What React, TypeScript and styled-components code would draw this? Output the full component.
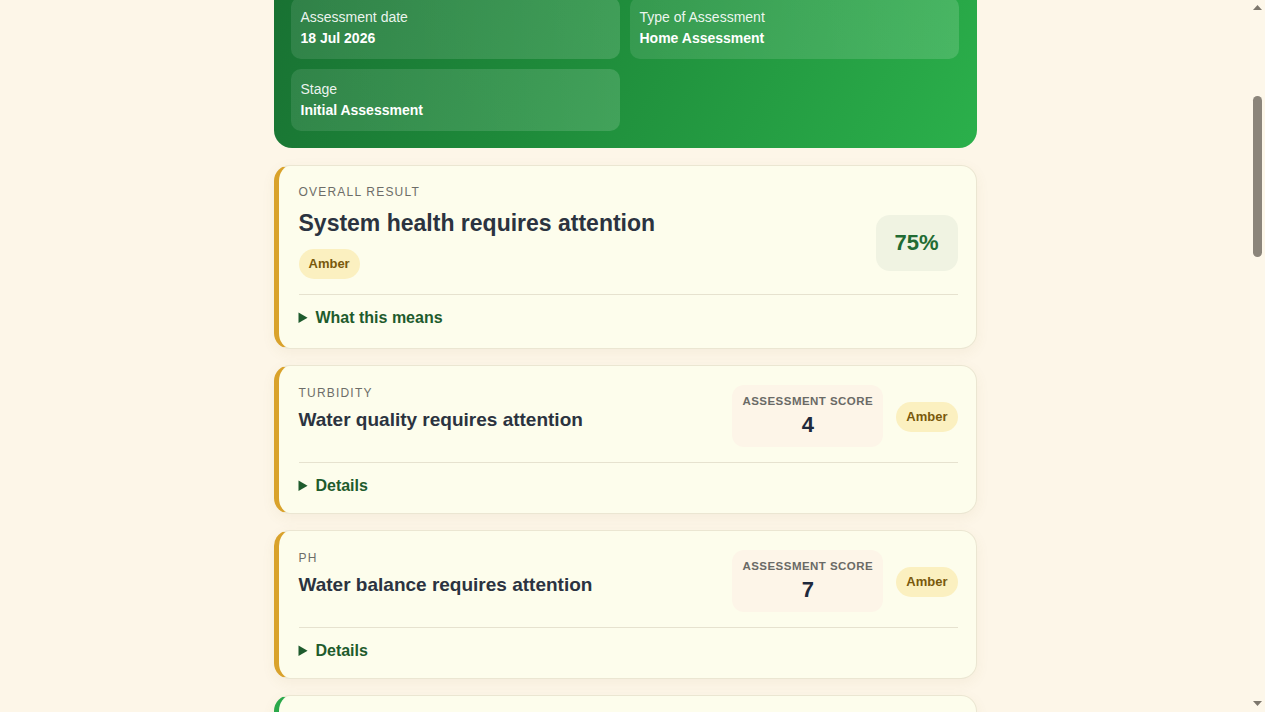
import React, { useLayoutEffect, useRef } from "react";
import styled, { createGlobalStyle } from "styled-components";

const GlobalStyle = createGlobalStyle`
  html {
    scrollbar-width: none;
  }
  html::-webkit-scrollbar { display: none; }
  body {
    margin: 0;
    background: #fdf6e8;
    font-family: "Liberation Sans", Arial, sans-serif;
    color: #2b3340;
  }
  * { box-sizing: border-box; }
`;

const Shell = styled.div`
  padding-right: 15px;
`;

const Page = styled.main`
  max-width: 703px;
  margin: 0 auto;
  padding: 24px 0 40px;
  display: flex;
  flex-direction: column;
  gap: 16px;
`;

const TopBar = styled.header`
  display: flex;
  align-items: center;
  gap: 10px;
  height: 56px;
  font-size: 18px;
  font-weight: 700;
  color: #1e5b2d;
`;

const Hero = styled.section`
  border-radius: 18px;
  padding: 24px 18px 17px 17px;
  margin-bottom: 1px;
  color: #ffffff;
  background: linear-gradient(120deg, #176c31 0%, #1e8a3a 45%, #2bb04b 100%);
`;

const HeroEyebrow = styled.div`
  font-size: 12px;
  letter-spacing: 0.1em;
  text-transform: uppercase;
  opacity: 0.85;
`;

const HeroTitle = styled.h1`
  margin: 8px 0 6px;
  font-size: 28px;
  line-height: 34px;
`;

const HeroSub = styled.p`
  margin: 0 0 20px;
  font-size: 14px;
  line-height: 20px;
  opacity: 0.9;
`;

const InfoGrid = styled.div`
  display: grid;
  grid-template-columns: 1fr 1fr;
  gap: 10px;
`;

const InfoBox = styled.div`
  border-radius: 10px;
  padding: 10px;
  background: linear-gradient(90deg, rgba(255, 255, 255, 0.1), rgba(255, 255, 255, 0.15));
`;

const InfoLabel = styled.div`
  font-size: 14px;
  line-height: 20px;
  color: rgba(255, 255, 255, 0.92);
`;

const InfoValue = styled.div`
  font-size: 14px;
  line-height: 21px;
  padding-top: 1px;
  font-weight: 700;
`;

const Card = styled.article<{ $accent: string }>`
  background: #fdfdec;
  border: 1px solid #ebe6d2;
  border-left: 5px solid ${(p) => p.$accent};
  border-radius: 16px;
  padding: 19px 18px 0 20px;
  box-shadow: 0 4px 14px rgba(140, 110, 50, 0.07);
`;

const Eyebrow = styled.div`
  font-size: 12px;
  line-height: 15px;
  letter-spacing: 0.1em;
  text-transform: uppercase;
  color: #6d6d68;
`;

const OverallRow = styled.div`
  display: flex;
  align-items: center;
  justify-content: space-between;
  margin-top: 9px;
`;

const OverallTitle = styled.h2`
  margin: 0;
  font-size: 23px;
  line-height: 29px;
  font-weight: 700;
  color: #2b3340;
`;

const Pill = styled.span<{ $tone: "amber" | "green" }>`
  display: inline-block;
  padding: 7px 10px;
  border-radius: 999px;
  font-size: 13px;
  line-height: 16px;
  font-weight: 700;
  background: ${(p) => (p.$tone === "amber" ? "#fbf0c0" : "#dcf3dc")};
  color: ${(p) => (p.$tone === "amber" ? "#79590c" : "#1e5b2d")};
`;

const PillSpacer = styled.div`
  margin-top: 11px;
  height: 30px;
`;

const Percent = styled.div`
  width: 82px;
  height: 56px;
  margin-top: -2px;
  border-radius: 14px;
  background: #f0f3e2;
  display: flex;
  align-items: center;
  justify-content: center;
  font-size: 22px;
  font-weight: 700;
  color: #226b33;
`;

const HeaderRow = styled.div`
  display: flex;
  align-items: flex-start;
  justify-content: space-between;
  padding-top: 1px;
`;

const MetricTitle = styled.h3`
  margin: 7px 0 0;
  font-size: 19px;
  line-height: 24px;
  font-weight: 700;
  color: #2b3340;
`;

const Side = styled.div`
  display: flex;
  align-items: center;
  gap: 13px;
`;

const ScoreBox = styled.div`
  width: 151px;
  height: 62px;
  margin-top: -1px;
  padding: 9px 8px 0;
  border-radius: 12px;
  background: #fdf5e8;
  text-align: center;
`;

const ScoreLabel = styled.div`
  font-size: 11.5px;
  line-height: 14px;
  font-weight: 700;
  letter-spacing: 0.04em;
  text-transform: uppercase;
  color: #6a6a66;
  white-space: nowrap;
`;

const ScoreValue = styled.div`
  margin-top: 3px;
  font-size: 22px;
  line-height: 28px;
  font-weight: 700;
  color: #1f2a3c;
`;

const Details = styled.details<{ $gap: number; $bottom: number }>`
  margin-top: ${(p) => p.$gap}px;
  border-top: 1px solid #e6e2cf;
  padding: 13px 0 ${(p) => p.$bottom}px;
`;

const Summary = styled.summary`
  font-size: 16px;
  line-height: 20px;
  font-weight: 700;
  color: #1e5b2d;
  cursor: pointer;
`;

const Footer = styled.footer`
  padding: 24px 0;
  font-size: 13px;
  color: #7a7468;
  text-align: center;
`;

/* drawn page scrollbar, fixed over the right edge */
const ScrollTrack = styled.div`
  position: fixed;
  top: 0;
  right: 0;
  width: 15px;
  height: 100vh;
  background: #fdf7ea;
`;

const ScrollThumb = styled.div`
  position: absolute;
  left: 3px;
  top: 96px;
  width: 9px;
  height: 161px;
  border-radius: 5px;
  background: #8b857b;
`;

const ScrollArrow = styled.svg<{ $bottom?: boolean }>`
  position: absolute;
  left: 3px;
  ${(p) => (p.$bottom ? "bottom: 6px;" : "top: 5px;")}
`;

type Metric = {
  name: string;
  title: string;
  score: number;
  tone: "amber" | "green";
};

const metrics: Metric[] = [
  { name: "Turbidity", title: "Water quality requires attention", score: 4, tone: "amber" },
  { name: "pH", title: "Water balance requires attention", score: 7, tone: "amber" },
  { name: "Hardness", title: "Water hardness is within range", score: 9, tone: "green" },
  { name: "Chlorine", title: "Disinfection levels are healthy", score: 9, tone: "green" },
  { name: "Iron", title: "Iron levels are within range", score: 8, tone: "green" },
  { name: "Nitrate", title: "Nitrate levels are within range", score: 10, tone: "green" },
];

const accent = (tone: "amber" | "green") => (tone === "amber" ? "#d9a22b" : "#2aa84a");

export default function App() {
  const gridRef = useRef<HTMLDivElement>(null);

  useLayoutEffect(() => {
    if ("scrollRestoration" in history) history.scrollRestoration = "manual";
    const el = gridRef.current;
    if (el) {
      const top = el.getBoundingClientRect().top + window.scrollY;
      window.scrollTo(0, top + 3);
    }
  }, []);

  return (
    <>
      <GlobalStyle />
      <Shell>
        <Page>
          <TopBar>
            <svg width="28" height="28" viewBox="0 0 24 24" fill="none" stroke="#1e8a3a" strokeWidth="2" strokeLinecap="round" strokeLinejoin="round">
              <path d="M12 2.7C9 6.5 6 9.8 6 13.5a6 6 0 0 0 12 0c0-3.7-3-7-6-10.8z" />
            </svg>
            Water Health Check
          </TopBar>
          <Hero>
            <HeroEyebrow>Assessment report</HeroEyebrow>
            <HeroTitle>Your water system report</HeroTitle>
            <HeroSub>A summary of the results from your recent assessment and what they mean for your home.</HeroSub>
            <InfoGrid ref={gridRef}>
              <InfoBox>
                <InfoLabel>Assessment date</InfoLabel>
                <InfoValue>18 Jul 2026</InfoValue>
              </InfoBox>
              <InfoBox>
                <InfoLabel>Type of Assessment</InfoLabel>
                <InfoValue>Home Assessment</InfoValue>
              </InfoBox>
              <InfoBox>
                <InfoLabel>Stage</InfoLabel>
                <InfoValue>Initial Assessment</InfoValue>
              </InfoBox>
            </InfoGrid>
          </Hero>

          <Card $accent={accent("amber")}>
            <Eyebrow>Overall result</Eyebrow>
            <OverallRow>
              <div>
                <OverallTitle>System health requires attention</OverallTitle>
                <PillSpacer>
                  <Pill $tone="amber">Amber</Pill>
                </PillSpacer>
              </div>
              <Percent>75%</Percent>
            </OverallRow>
            <Details $gap={15} $bottom={20}>
              <Summary>What this means</Summary>
            </Details>
          </Card>

          {metrics.map((m) => (
            <Card key={m.name} $accent={accent(m.tone)}>
              <HeaderRow>
                <div>
                  <Eyebrow>{m.name}</Eyebrow>
                  <MetricTitle>{m.title}</MetricTitle>
                </div>
                <Side>
                  <ScoreBox>
                    <ScoreLabel>Assessment score</ScoreLabel>
                    <ScoreValue>{m.score}</ScoreValue>
                  </ScoreBox>
                  <Pill $tone={m.tone}>{m.tone === "amber" ? "Amber" : "Green"}</Pill>
                </Side>
              </HeaderRow>
              <Details $gap={15} $bottom={17}>
                <Summary>Details</Summary>
              </Details>
            </Card>
          ))}

          <Footer>Results are based on the samples collected during your assessment.</Footer>
        </Page>
      </Shell>
      <ScrollTrack aria-hidden="true">
        <ScrollArrow width="9" height="5" viewBox="0 0 9 5">
          <path d="M4.5 0L9 5H0z" fill="#7d776d" />
        </ScrollArrow>
        <ScrollThumb />
        <ScrollArrow $bottom width="9" height="5" viewBox="0 0 9 5">
          <path d="M0 0h9L4.5 5z" fill="#7d776d" />
        </ScrollArrow>
      </ScrollTrack>
    </>
  );
}
